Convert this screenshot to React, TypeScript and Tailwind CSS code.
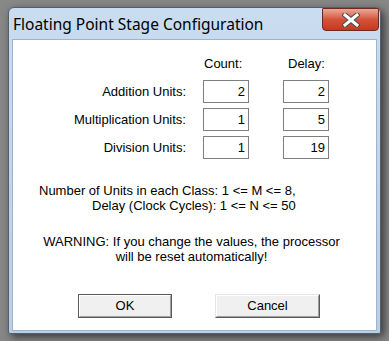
import React from "react";

const body = { fontFamily: '"Liberation Sans", Arial, sans-serif' };

function NumBox({ v }: { v: string }) {
  return (
    <div className="w-[46px] h-[23px] border border-[#7f7f7f] bg-white flex items-center justify-end pr-[3px] text-[13px] leading-[15px] text-black">
      {v}
    </div>
  );
}

function Row({ label, a, b }: { label: string; a: string; b: string }) {
  return (
    <div className="flex items-center">
      <div className="w-[173px] text-right text-[13px] leading-[15px] text-black">{label}</div>
      <div className="ml-[17px]">
        <NumBox v={a} />
      </div>
      <div className="ml-[34px]">
        <NumBox v={b} />
      </div>
    </div>
  );
}

export default function App() {
  return (
    <div className="w-[389px] h-[341px] bg-[#878787] pt-[7px] pl-[8px] overflow-hidden" style={body}>
      <div className="relative w-[373px] h-[327px] rounded-t-[6px] rounded-b-[2px] border border-[#555f6b] bg-gradient-to-b from-[#c9dcf0] to-[#b8cfe8] shadow-[3px_3px_8px_rgba(0,0,0,0.6)] flex flex-col">
        {/* title bar */}
        <div className="h-[31px] flex items-center pl-[4px]">
          <span
            className="text-[15.5px] leading-[18px] text-black"
            style={{ fontFamily: '"Noto Sans", "Open Sans", sans-serif' }}
          >
            Floating Point Stage Configuration
          </span>
        </div>
        {/* close button */}
        <div className="absolute top-0 right-[1px] w-[57px] h-[23px] rounded-b-[4px] rounded-t-[1px] border border-[#6e2a20] bg-gradient-to-b from-[#eaa898] via-[#d4523b] to-[#c6381f] flex items-center justify-center">
          <svg width="18" height="14" viewBox="0 0 18 14">
            <path
              d="M3 2 L15 12 M15 2 L3 12"
              stroke="#4a4a4a"
              strokeWidth="5"
              strokeLinecap="square"
              fill="none"
            />
            <path
              d="M3 2 L15 12 M15 2 L3 12"
              stroke="#ffffff"
              strokeWidth="3"
              strokeLinecap="square"
              fill="none"
            />
          </svg>
        </div>
        {/* client area */}
        <div className="mx-[3px] mb-[2px] flex-1 bg-white border border-[#9fb4cc] flex flex-col">
          <div className="pt-[16px] flex text-[13px] leading-[15px] text-black">
            <div className="w-[173px]" />
            <div className="ml-[18px] w-[45px]">Count:</div>
            <div className="ml-[39px]">Delay:</div>
          </div>
          <div className="mt-[9px] flex flex-col gap-[5px]">
            <Row label="Addition Units:" a="2" b="2" />
            <Row label="Multiplication Units:" a="1" b="5" />
            <Row label="Division Units:" a="1" b="19" />
          </div>
          <div className="mt-[24px] text-[13px] leading-[15px] text-black">
            <div className="pl-[26px]">Number of Units in each Class: 1 &lt;= M &lt;= 8,</div>
            <div className="pl-[79px]">Delay (Clock Cycles): 1 &lt;= N &lt;= 50</div>
          </div>
          <div className="mt-[21px] pr-[6px] text-center text-[13px] leading-[15px] text-black">
            <div>WARNING: If you change the values, the processor</div>
            <div>will be reset automatically!</div>
          </div>
          <div className="mt-[30px] flex">
            <button className="ml-[65px] w-[94px] h-[24px] border border-[#5a5a5a] bg-[#f0f0f0] p-0">
              <div className="w-full h-full border border-t-white border-l-white border-r-[#a0a0a0] border-b-[#a0a0a0] flex items-center justify-center text-[13px] text-black">
                OK
              </div>
            </button>
            <button className="ml-[43px] w-[105px] h-[24px] border border-t-[#e6e6e6] border-l-[#e6e6e6] border-r-[#5a5a5a] border-b-[#5a5a5a] bg-[#f0f0f0] p-0">
              <div className="w-full h-full border border-t-white border-l-white border-r-[#a0a0a0] border-b-[#a0a0a0] flex items-center justify-center text-[13px] text-black">
                Cancel
              </div>
            </button>
          </div>
        </div>
      </div>
    </div>
  );
}
